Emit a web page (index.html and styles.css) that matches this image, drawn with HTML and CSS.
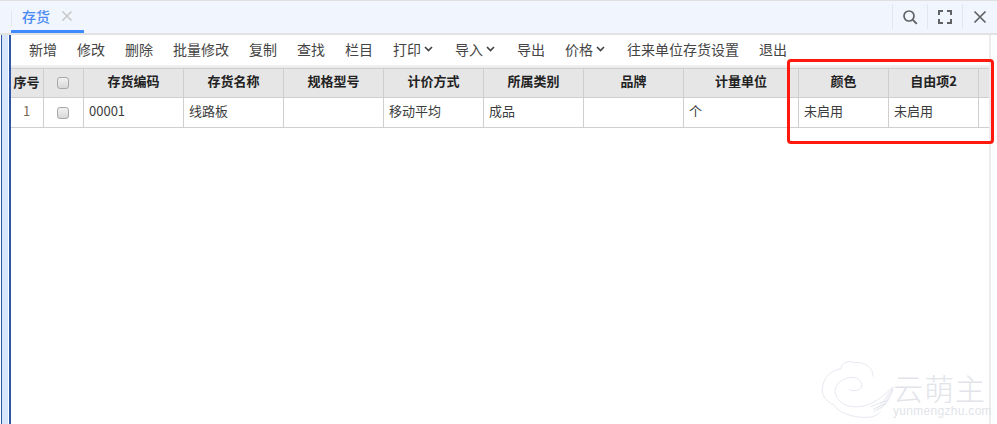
FILE: index.html
```html
<!DOCTYPE html>
<html lang="zh">
<head>
<meta charset="utf-8">
<title>存货</title>
<link rel="stylesheet" href="styles.css">
</head>
<body>
<div class="app">
  <header class="tabbar">
    <div class="tab"><span class="tab-label">存货</span>
      <svg class="tab-close" width="12" height="12" viewBox="0 0 12 12"><path d="M1.500 1.500l9 9M10.500 1.500l-9 9" stroke="#c8c8c8" stroke-width="1.600" fill="none"/></svg>
    </div>
    <div class="tools">
      <button class="tool"><svg width="16" height="16" viewBox="0 0 16 16"><circle cx="7" cy="7" r="5" stroke="#606266" stroke-width="1.700" fill="none"/><path d="M10.800 10.800l4 4" stroke="#606266" stroke-width="1.900" fill="none"/></svg></button>
      <button class="tool"><svg width="14" height="14" viewBox="0 0 14 14"><path d="M1 5V1h4M9 1h4v4M13 9v4H9M5 13H1V9" stroke="#606266" stroke-width="2" fill="none"/></svg></button>
      <button class="tool"><svg width="14" height="14" viewBox="0 0 14 14"><path d="M1.500 1.500l11 11M12.500 1.500l-11 11" stroke="#606266" stroke-width="1.700" fill="none"/></svg></button>
    </div>
  </header>
  <div class="main">
    <div class="rail"></div>
    <div class="panel">
      <nav class="toolbar">
        <span class="act">新增</span><span class="act">修改</span><span class="act">删除</span><span class="act">批量修改</span><span class="act">复制</span><span class="act">查找</span><span class="act">栏目</span>
        <span class="act">打印<svg class="chev" width="9" height="6" viewBox="0 0 9 6"><path d="M1 1l3.500 3.500L8 1" stroke="#444" stroke-width="1.700" fill="none"/></svg></span>
        <span class="act">导入<svg class="chev" width="9" height="6" viewBox="0 0 9 6"><path d="M1 1l3.500 3.500L8 1" stroke="#444" stroke-width="1.700" fill="none"/></svg></span>
        <span class="act">导出</span>
        <span class="act">价格<svg class="chev" width="9" height="6" viewBox="0 0 9 6"><path d="M1 1l3.500 3.500L8 1" stroke="#444" stroke-width="1.700" fill="none"/></svg></span>
        <span class="act">往来单位存货设置</span><span class="act">退出</span>
      </nav>
      <div class="band"></div>
      <table class="grid">
        <colgroup>
          <col class="c-no"><col class="c-chk"><col class="c-w"><col class="c-w"><col class="c-w"><col class="c-w"><col class="c-w"><col class="c-w"><col class="c-unit"><col class="c-free"><col class="c-free"><col>
        </colgroup>
        <thead>
          <tr><th>序号</th><th class="mid"><span class="chk"></span></th><th>存货编码</th><th>存货名称</th><th>规格型号</th><th>计价方式</th><th>所属类别</th><th>品牌</th><th>计量单位</th><th>颜色</th><th>自由项2</th><th></th></tr>
        </thead>
        <tbody>
          <tr><td class="no">1</td><td class="mid"><span class="chk"></span></td><td>00001</td><td>线路板</td><td></td><td>移动平均</td><td>成品</td><td></td><td>个</td><td>未启用</td><td>未启用</td><td></td></tr>
        </tbody>
      </table>
    </div>
  </div>
  <div class="callout"></div>
  <div class="mark">
    <svg class="mark-logo" width="90" height="70" viewBox="0 0 270 210">
      <g fill="none" stroke="#d9dde9" stroke-width="2">
        <path d="M168 68C170 40 140 22 112 26C92 18 72 28 72 44C44 48 18 70 16 104C14 130 34 146 50 152C62 176 110 192 150 190C170 190 184 182 190 172"/>
        <path d="M228 98C200 126 170 152 128 158C88 162 56 142 54 112C54 88 80 70 108 70C128 72 140 88 132 102C124 112 106 112 96 106"/>
        <path d="M228 100C208 128 190 160 170 174M228 104C214 130 200 156 180 170M228 108C220 130 208 152 190 164M160 158L214 138M168 166L208 148"/>
      </g>
    </svg>
    <div class="mark-text"><span class="mark-cn">云萌主</span><span class="mark-en">yunmengzhu.com</span></div>
  </div>
</div>
</body>
</html>
```

FILE: styles.css
```css
* { box-sizing: border-box; }
html, body { margin: 0; height: 100%; }
body { font-family: "Noto Sans CJK SC", "Liberation Sans", sans-serif; font-size: 13px; color: #333; background: #fff; overflow: hidden; }
.app { position: relative; width: 997px; height: 424px; display: flex; flex-direction: column; }
.tabbar { height: 35px; flex: none; display: flex; justify-content: space-between; background: #f1f5fd; border-top: 1px solid #e0e0e0; border-bottom: 2px solid #e2e2e2; }
.tab { margin-left: 11px; width: 73px; height: 32px; display: flex; align-items: center; padding: 0 0 0 11px; border-bottom: 3px solid #3d8bff; position: relative; }
.tab::before { content: ""; position: absolute; left: 0; top: 10px; height: 16px; border-left: 1px solid #e3e6ec; }
.tab-label { font-size: 14px; font-weight: 500; color: #4a8af4; line-height: 20px; }
.tab-close { margin-left: 11px; }
.tools { display: flex; margin: 3px 0 0; height: 25px; }
.tool { width: 35px; height: 25px; padding: 0; border: 0; border-left: 1px solid #e2e6ed; background: none; display: flex; align-items: center; justify-content: center; }
.main { flex: 1; display: flex; min-height: 0; }
.rail { width: 8px; flex: none; background: #d8e6fb; border-left: 1px solid #fff; position: relative; }
.rail::before { content: ""; position: absolute; left: 0; top: 0; bottom: 0; width: 7px; border-left: 1px solid #2e56a8; border-right: 2px solid #2e56a8; }
.panel { width: 983px; flex: none; display: flex; flex-direction: column; padding-left: 1px; border-right: 2px solid #ececec; }
.toolbar { height: 30px; flex: none; display: flex; align-items: center; gap: 20px; padding: 0 0 2px 20px; font-size: 14px; color: #444; line-height: 20px; }
.act { display: flex; align-items: center; }
.chev { margin-left: 3px; margin-right: 2px; }
.band { height: 3px; flex: none; background: linear-gradient(#f4f4f4, #e8e8e8); }
.grid { table-layout: fixed; width: 980px; border-collapse: collapse; font-size: 13px; }
.c-no { width: 34px; } .c-chk { width: 40px; } .c-w { width: 100px; } .c-unit { width: 115px; } .c-free { width: 90px; }
.grid th, .grid td { border: 1px solid #cfcfcf; overflow: hidden; white-space: nowrap; }
.grid td { height: 30px; padding: 0 5px 4px; color: #3c3c3c; }
.grid th { height: 29px; padding: 0 5px 5px; background: #e6e6e6; color: #222; font-weight: 700; text-align: center; }
.grid th:first-child, .grid td.no { padding: 0 0 4px; text-align: center; }
.grid th:last-child, .grid td:last-child { border-right: 0; }
.grid .no { color: #7a6a50; }
.grid th.mid, .grid td.mid { text-align: center; padding: 0 1px 0 0; }
.chk { display: block; margin: 0 auto; width: 12px; height: 12px; border: 1px solid #a8a8a8; border-radius: 3px; background: linear-gradient(#f2f2f2, #d8d8d8); }
.callout { position: absolute; left: 787px; top: 59px; width: 207px; height: 85px; border: 3px solid #ff1a0d; border-radius: 4px; }
.mark { position: absolute; left: 817px; top: 354px; display: flex; align-items: flex-start; }
.mark-logo { flex: none; }
.mark-text { margin: 15px 0 0 -14px; display: flex; flex-direction: column; color: #e2e4ea; }
.mark-cn { font-size: 30px; line-height: 36px; letter-spacing: 1px; font-weight: 300; }
.mark-en { font-size: 12px; line-height: 13px; font-family: "Liberation Sans", sans-serif; letter-spacing: 0.3px; }
```
